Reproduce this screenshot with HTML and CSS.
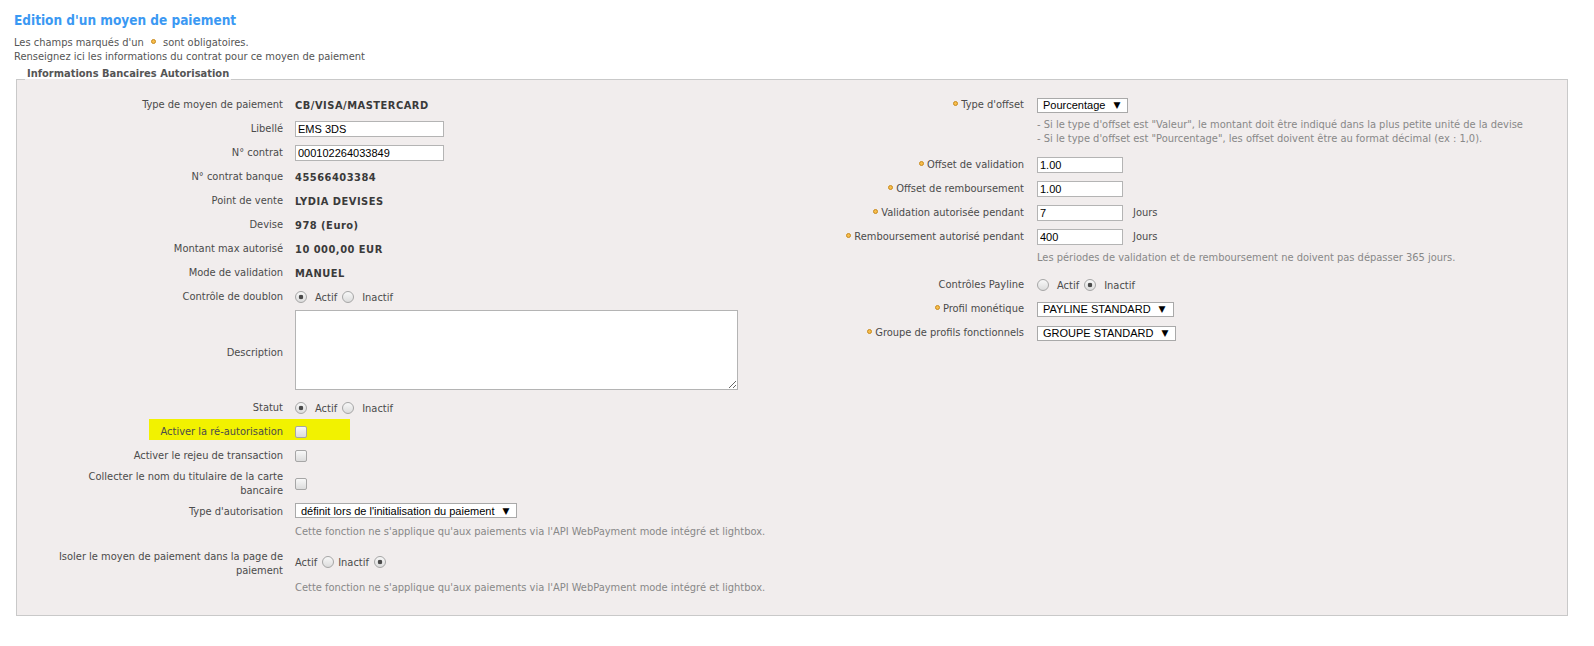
FILE: index.html
```html
<!DOCTYPE html>
<html lang="fr">
<head>
    <meta charset="UTF-8">
    <meta name="viewport" content="width=device-width, initial-scale=1.0">
    <title>Edition d'un moyen de paiement</title>
    <link rel="stylesheet" href="styles.css">
</head>
<body>
<div class="page">
    <h1 class="page-title">Edition d'un moyen de paiement</h1>
    <p class="intro">Les champs marqués d'un <span class="req"></span> sont obligatoires.<br>
        Renseignez ici les informations du contrat pour ce moyen de paiement</p>

    <fieldset class="block">
        <legend>Informations Bancaires Autorisation</legend>
        <div class="cols">
            <!-- colonne gauche -->
            <div class="col col-left">
                <div class="row"><span class="lbl">Type de moyen de paiement</span><div class="val"><strong>CB/VISA/MASTERCARD</strong></div></div>
                <div class="row"><label class="lbl" for="libelle">Libellé</label><div class="val"><input class="text" id="libelle" type="text" value="EMS 3DS"></div></div>
                <div class="row"><label class="lbl" for="contrat">N° contrat</label><div class="val"><input class="text" id="contrat" type="text" value="000102264033849"></div></div>
                <div class="row"><span class="lbl">N° contrat banque</span><div class="val"><strong>45566403384</strong></div></div>
                <div class="row"><span class="lbl">Point de vente</span><div class="val"><strong>LYDIA DEVISES</strong></div></div>
                <div class="row"><span class="lbl">Devise</span><div class="val"><strong>978 (Euro)</strong></div></div>
                <div class="row"><span class="lbl">Montant max autorisé</span><div class="val"><strong>10 000,00 EUR</strong></div></div>
                <div class="row"><span class="lbl">Mode de validation</span><div class="val"><strong>MANUEL</strong></div></div>
                <div class="row">
                    <span class="lbl">Contrôle de doublon</span>
                    <div class="val">
                        <label class="opt"><input type="radio" name="doublon" checked>Actif</label>
                        <label class="opt"><input type="radio" name="doublon">Inactif</label>
                    </div>
                </div>
                <div class="row row-area"><label class="lbl" for="description">Description</label><div class="val"><textarea id="description"></textarea></div></div>
                <div class="row">
                    <span class="lbl">Statut</span>
                    <div class="val">
                        <label class="opt"><input type="radio" name="statut" checked>Actif</label>
                        <label class="opt"><input type="radio" name="statut">Inactif</label>
                    </div>
                </div>
                <div class="row row-mark"><label class="lbl" for="reauto">Activer la ré-autorisation</label><div class="val"><input type="checkbox" id="reauto"></div></div>
                <div class="row"><label class="lbl" for="rejeu">Activer le rejeu de transaction</label><div class="val"><input type="checkbox" id="rejeu"></div></div>
                <div class="row row-tall"><label class="lbl" for="titulaire">Collecter le nom du titulaire de la carte<br>bancaire</label><div class="val"><input type="checkbox" id="titulaire"></div></div>
                <div class="row row-top row-auth">
                    <span class="lbl">Type d'autorisation</span>
                    <div class="val val-stack">
                        <span class="select">définit lors de l'initialisation du paiement<span class="caret">▼</span></span>
                        <p class="note">Cette fonction ne s'applique qu'aux paiements via l'API WebPayment mode intégré et lightbox.</p>
                    </div>
                </div>
                <div class="row row-top row-isolate">
                    <span class="lbl">Isoler le moyen de paiement dans la page de<br>paiement</span>
                    <div class="val val-stack">
                        <div class="radios">
                            <label class="opt opt-after">Actif<input type="radio" name="isoler"></label>
                            <label class="opt opt-after">Inactif<input type="radio" name="isoler" checked></label>
                        </div>
                        <p class="note">Cette fonction ne s'applique qu'aux paiements via l'API WebPayment mode intégré et lightbox.</p>
                    </div>
                </div>
            </div>

            <!-- colonne droite -->
            <div class="col col-right">
                <div class="row"><span class="lbl"><span class="req"></span>Type d'offset</span><div class="val"><span class="select">Pourcentage<span class="caret">▼</span></span></div></div>
                <p class="note note-offset">- Si le type d'offset est "Valeur", le montant doit être indiqué dans la plus petite unité de la devise<br>
                    - Si le type d'offset est "Pourcentage", les offset doivent être au format décimal (ex : 1,0).</p>
                <div class="row"><label class="lbl" for="offval"><span class="req"></span>Offset de validation</label><div class="val"><input class="text" id="offval" type="text" value="1.00"></div></div>
                <div class="row"><label class="lbl" for="offremb"><span class="req"></span>Offset de remboursement</label><div class="val"><input class="text" id="offremb" type="text" value="1.00"></div></div>
                <div class="row"><label class="lbl" for="valdays"><span class="req"></span>Validation autorisée pendant</label><div class="val"><input class="text" id="valdays" type="text" value="7"><span class="unit">Jours</span></div></div>
                <div class="row"><label class="lbl" for="rembdays"><span class="req"></span>Remboursement autorisé pendant</label><div class="val"><input class="text" id="rembdays" type="text" value="400"><span class="unit">Jours</span></div></div>
                <p class="note note-days">Les périodes de validation et de remboursement ne doivent pas dépasser 365 jours.</p>
                <div class="row">
                    <span class="lbl">Contrôles Payline</span>
                    <div class="val">
                        <label class="opt"><input type="radio" name="payline">Actif</label>
                        <label class="opt"><input type="radio" name="payline" checked>Inactif</label>
                    </div>
                </div>
                <div class="row"><span class="lbl"><span class="req"></span>Profil monétique</span><div class="val"><span class="select">PAYLINE STANDARD<span class="caret">▼</span></span></div></div>
                <div class="row"><span class="lbl"><span class="req"></span>Groupe de profils fonctionnels</span><div class="val"><span class="select">GROUPE STANDARD<span class="caret">▼</span></span></div></div>
            </div>
        </div>
    </fieldset>
</div>
</body>
</html>
```

FILE: styles.css
```css
body {
    margin: 0;
    font-family: Tahoma, "DejaVu Sans Condensed", "DejaVu Sans", sans-serif;
    font-stretch: condensed;
    font-size: 11px;
    color: #4b4b4b;
    background-color: #fff;
}

.page {
    padding: 12px 26px 20px 14px;
}

.page-title {
    margin: 0;
    font-size: 13.5px;
    line-height: 17px;
    font-weight: bold;
    color: #3b99f3;
}

.intro {
    margin: 7px 0 0;
    line-height: 14px;
    color: #555;
}

.req {
    display: inline-block;
    width: 3px;
    height: 3px;
    margin-right: 3px;
    border: 1px solid #c88a1e;
    border-radius: 50%;
    background-color: #f7bd4a;
    vertical-align: 2px;
}

.intro .req {
    margin: 0 4px;
}

.block {
    margin: 3px 0 0 2px;
    padding: 0;
    border: 1px solid #c9c9c9;
    background-color: #f1eded;
}

.block legend {
    margin-left: 8px;
    padding: 0 2px 12px;
    line-height: 13px;
    font-weight: bold;
    color: #555;
}

.cols {
    display: flex;
}

.col {
    flex: 1;
    padding-top: 1px;
}

.col-left {
    padding-bottom: 21px;
}

.row {
    display: flex;
    align-items: center;
    min-height: 24px;
}

.lbl {
    flex: none;
    box-sizing: border-box;
    text-align: right;
    line-height: 14px;
    white-space: nowrap;
}

.col-left .lbl {
    width: 278px;
    padding-right: 12px;
}

.col-right .lbl {
    width: 245px;
    padding-right: 13px;
}

.val {
    display: flex;
    align-items: center;
}

.val strong {
    color: #3a3a3a;
    letter-spacing: 0.5px;
}

.val-stack {
    flex-direction: column;
    align-items: flex-start;
}

.row-top {
    align-items: flex-start;
}

.row-area {
    padding: 1px 0 6px;
}

.row-area .lbl {
    padding-top: 6px;
}

.row-tall {
    min-height: 32px;
}

.row-auth {
    padding-bottom: 11px;
}

.row-auth .lbl {
    padding-top: 5px;
}

.row-auth .select {
    margin-top: 3px;
}

.row-auth .note {
    margin-top: 7px;
}

.row-isolate .lbl {
    padding-top: 1px;
}

.row-isolate .radios {
    display: flex;
    align-items: center;
    height: 16px;
    margin-top: 5px;
}

.row-isolate .note {
    margin-top: 11px;
}

/* surlignage jaune */
.row-mark {
    position: relative;
}

.row-mark::before {
    content: "";
    position: absolute;
    left: 132px;
    top: -1px;
    width: 201px;
    height: 21px;
    background-color: #f2f200;
}

.row-mark > * {
    position: relative;
}

.text {
    box-sizing: border-box;
    height: 16px;
    margin: 0;
    padding: 0 2px;
    border: 1px solid #b4b4b4;
    background-color: #fff;
    font: 11px Arial, "Liberation Sans", sans-serif;
    color: #000;
}

.col-left .text {
    width: 149px;
}

.col-right .text {
    width: 86px;
}

textarea {
    display: block;
    box-sizing: border-box;
    width: 443px;
    height: 80px;
    margin: 0;
    border: 1px solid #b4b4b4;
    background-color: #fff;
}

.select {
    display: inline-flex;
    align-items: center;
    box-sizing: border-box;
    height: 15px;
    padding: 0 7px 0 5px;
    border: 1px solid #a9a9a9;
    background-color: #fff;
    font: 11px Arial, "Liberation Sans", sans-serif;
    color: #000;
    white-space: nowrap;
}

.caret {
    margin-left: 8px;
    font-family: "DejaVu Sans", sans-serif;
    font-size: 9px;
}

.unit {
    margin: -2px 0 0 10px;
}

.note {
    margin: 0;
    line-height: 13px;
    color: #888;
}

.note-offset {
    margin: 1px 0 7px 245px;
    line-height: 14px;
}

.note-days {
    margin: 2px 0 8px 245px;
    line-height: 14px;
}

input[type="radio"],
input[type="checkbox"] {
    appearance: none;
    box-sizing: border-box;
    width: 12px;
    height: 12px;
    margin: 0;
    border: 1px solid #a6a6a6;
    background: linear-gradient(#f8f8f8, #dcdcdc);
}

input[type="radio"] {
    border-radius: 50%;
}

input[type="radio"]:checked {
    background: radial-gradient(circle, #4a4a4a 0 2px, transparent 2.6px), linear-gradient(#f8f8f8, #dcdcdc);
}

input[type="checkbox"] {
    border-radius: 2px;
}

.opt {
    display: inline-flex;
    align-items: center;
    margin-right: 5px;
}

.opt input[type="radio"] {
    margin: 0 8px 0 0;
}

.opt-after {
    margin-right: 0;
}

.opt-after input[type="radio"] {
    margin: 0 4px 0 5px;
}
```
